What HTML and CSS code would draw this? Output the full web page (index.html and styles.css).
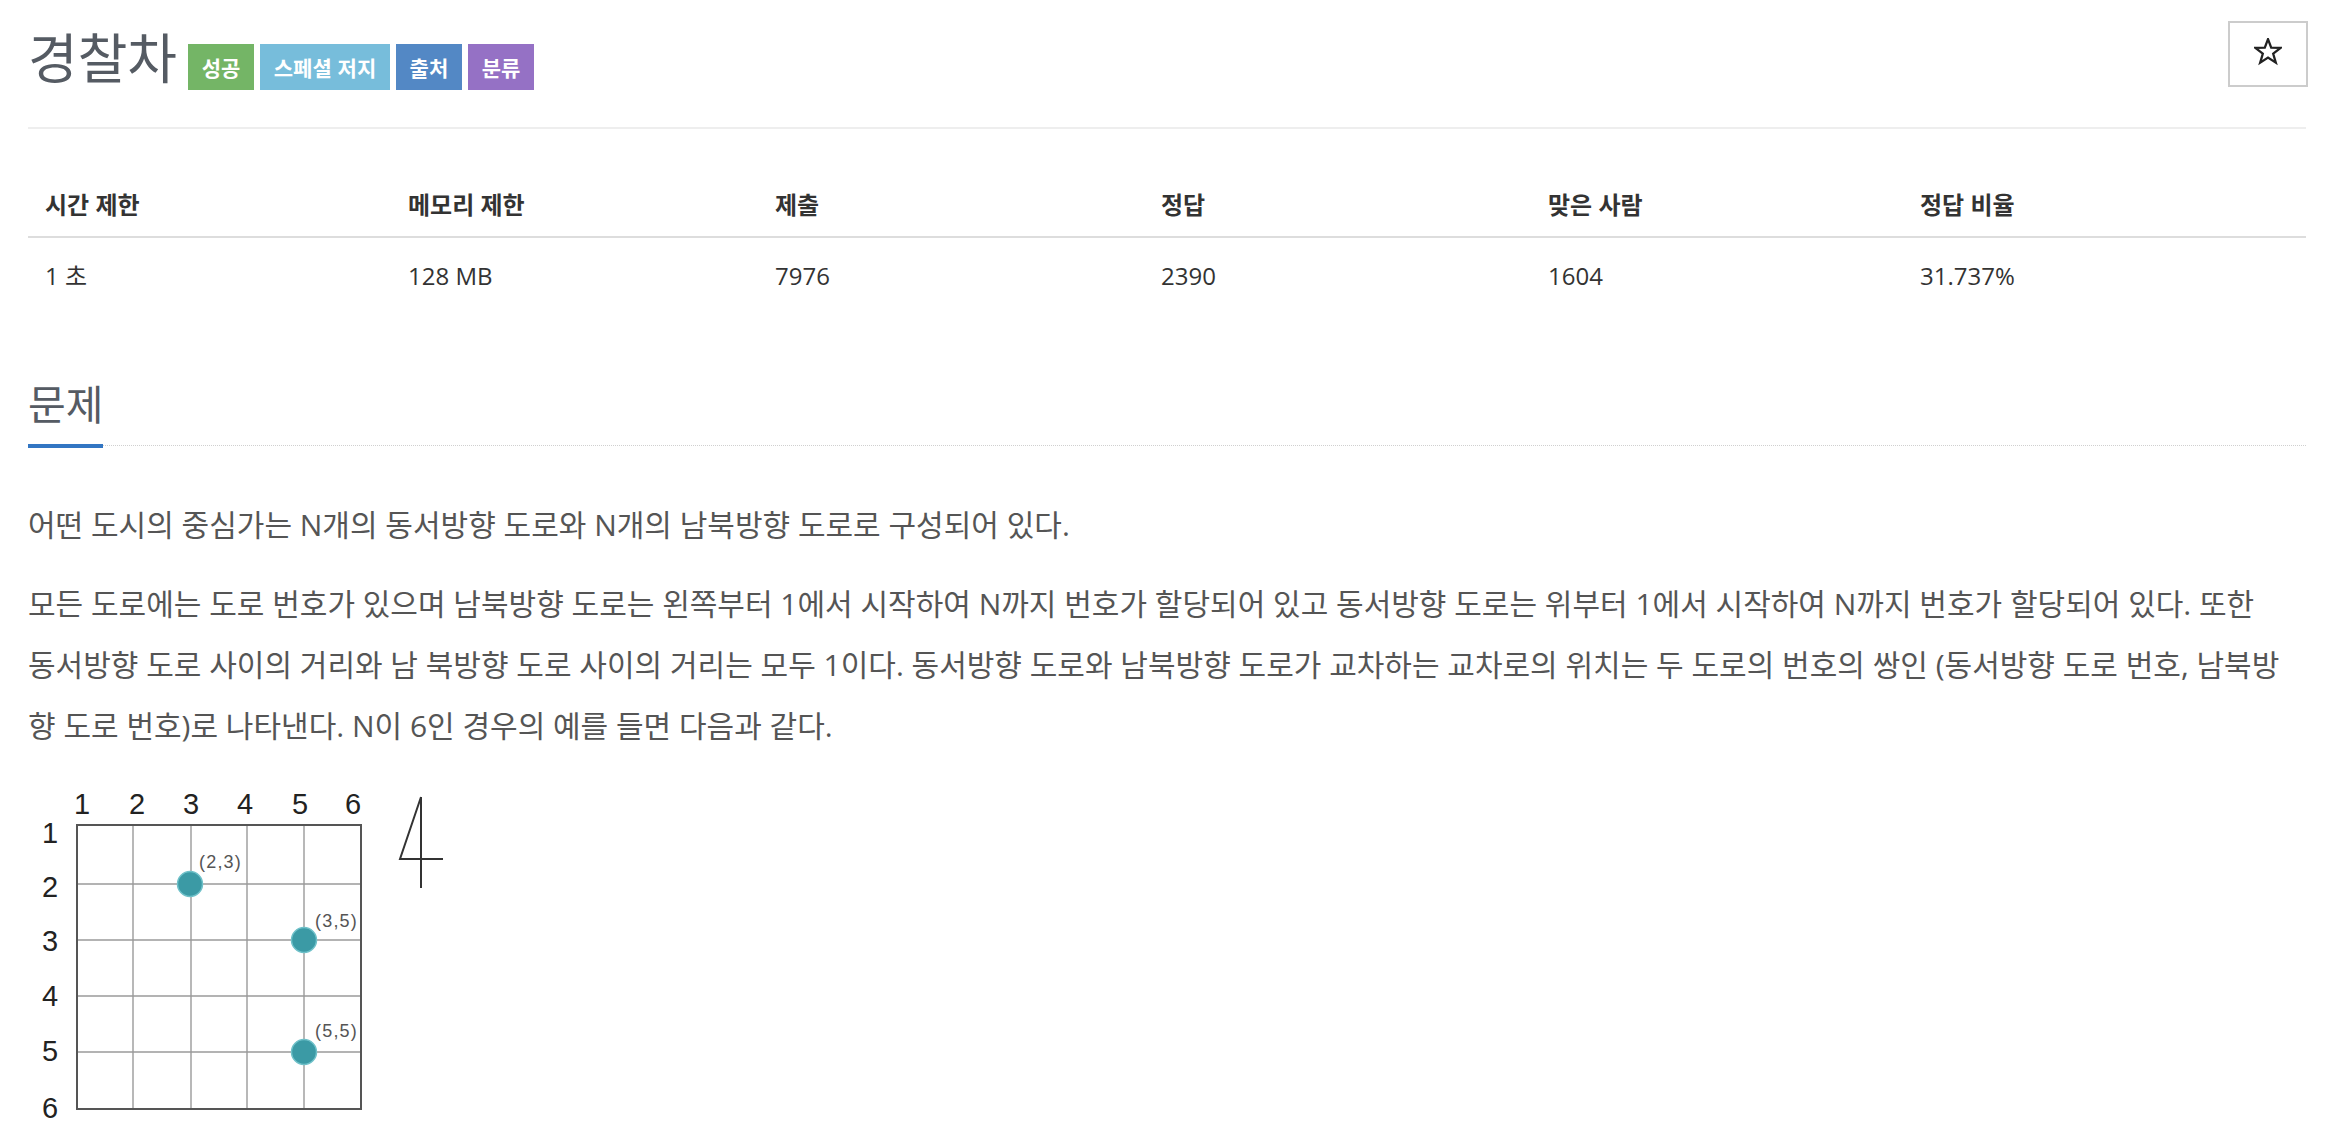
FILE: index.html
```html
<!DOCTYPE html>
<html lang="ko">
<head>
<meta charset="utf-8">
<title>경찰차</title>
<link rel="stylesheet" href="styles.css">
</head>
<body>
<div class="page">
  <header class="head">
    <div class="title-row">
      <h1 class="title">경찰차</h1>
      <div class="labels">
        <span class="label ac">성공</span>
        <span class="label spj">스페셜 저지</span>
        <span class="label src">출처</span>
        <span class="label cat">분류</span>
      </div>
    </div>
    <button class="star" type="button" aria-label="즐겨찾기">
      <svg width="28" height="28" viewBox="0 0 28 28" xmlns="http://www.w3.org/2000/svg">
        <path d="M14 1.2 L17.2 9.6 L26.6 9.9 L19.2 15.7 L21.8 24.6 L14 19.5 L6.2 24.6 L8.8 15.7 L1.4 9.9 L10.8 9.6 Z" fill="none" stroke="#222" stroke-width="2.3" stroke-linejoin="miter"/>
      </svg>
    </button>
  </header>

  <div class="stats">
    <div class="th">시간 제한</div>
    <div class="th">메모리 제한</div>
    <div class="th">제출</div>
    <div class="th">정답</div>
    <div class="th">맞은 사람</div>
    <div class="th">정답 비율</div>
    <div class="td">1 초</div>
    <div class="td">128 MB</div>
    <div class="td">7976</div>
    <div class="td">2390</div>
    <div class="td">1604</div>
    <div class="td">31.737%</div>
  </div>

  <section class="problem">
    <div class="headline"><h2>문제</h2></div>
    <div class="problem-text">
      <p>어떤 도시의 중심가는 N개의 동서방향 도로와 N개의 남북방향 도로로 구성되어 있다.</p>
      <p>모든 도로에는 도로 번호가 있으며 남북방향 도로는 왼쪽부터 1에서 시작하여 N까지 번호가 할당되어 있고 동서방향 도로는 위부터 1에서 시작하여 N까지 번호가 할당되어 있다. 또한 동서방향 도로 사이의 거리와 남 북방향 도로 사이의 거리는 모두 1이다. 동서방향 도로와 남북방향 도로가 교차하는 교차로의 위치는 두 도로의 번호의 쌍인 (동서방향 도로 번호, 남북방 향 도로 번호)로 나타낸다. N이 6인 경우의 예를 들면 다음과 같다.</p>
      <svg class="figure" width="440" height="360" viewBox="0 0 440 360" xmlns="http://www.w3.org/2000/svg">
        <rect x="0" y="0" width="440" height="360" fill="#ffffff"/>
        <g stroke="#9a9a9a" stroke-width="1.4">
          <line x1="105" y1="51" x2="105" y2="335"/>
          <line x1="163" y1="51" x2="163" y2="335"/>
          <line x1="219" y1="51" x2="219" y2="335"/>
          <line x1="276" y1="51" x2="276" y2="335"/>
          <line x1="49" y1="110" x2="333" y2="110"/>
          <line x1="49" y1="166" x2="333" y2="166"/>
          <line x1="49" y1="222" x2="333" y2="222"/>
          <line x1="49" y1="278" x2="333" y2="278"/>
        </g>
        <rect x="49" y="51" width="284" height="284" fill="none" stroke="#555" stroke-width="2"/>
        <g class="fig-num" font-size="29" fill="#222" text-anchor="middle">
          <text x="54" y="40">1</text>
          <text x="109" y="40">2</text>
          <text x="163" y="40">3</text>
          <text x="217" y="40">4</text>
          <text x="272" y="40">5</text>
          <text x="325" y="40">6</text>
          <text x="22" y="69">1</text>
          <text x="22" y="123">2</text>
          <text x="22" y="177">3</text>
          <text x="22" y="232">4</text>
          <text x="22" y="287">5</text>
          <text x="22" y="344">6</text>
        </g>
        <g fill="#3b9aa5" stroke="#6fc1c9" stroke-width="1.5">
          <circle cx="162" cy="110" r="12.5"/>
          <circle cx="276" cy="166" r="12.5"/>
          <circle cx="276" cy="278" r="12.5"/>
        </g>
        <g class="fig-lab" font-size="18" fill="#555">
          <text x="171" y="94">(2,3)</text>
          <text x="287" y="153">(3,5)</text>
          <text x="287" y="263">(5,5)</text>
        </g>
        <path d="M393 23 L372 85 L415 85 M393 23 L393 114" fill="none" stroke="#333" stroke-width="2"/>
      </svg>
    </div>
  </section>
</div>
</body>
</html>
```

FILE: styles.css
```css
* { box-sizing: border-box; }

html, body {
  margin: 0;
  padding: 0;
  background: #ffffff;
}

body {
  font-family: "Open Sans", "Noto Sans CJK KR", sans-serif;
  color: #333;
}

.page {
  padding: 0 28px;
}

.head {
  display: flex;
  justify-content: space-between;
  align-items: flex-start;
  height: 129px;
  padding-top: 21px;
  border-bottom: 2px solid #eeeeee;
}

.title-row {
  display: flex;
  align-items: flex-start;
}

.title {
  margin: 2px 0 0 0;
  font-family: "Noto Sans CJK KR", sans-serif;
  font-size: 54px;
  font-weight: 400;
  line-height: 66px;
  color: #555b63;
}

.labels {
  display: flex;
  gap: 6px;
  margin-top: 23px;
  margin-left: 11px;
}

.label {
  display: block;
  height: 46px;
  padding: 0 13.7px;
  font-family: "Noto Sans CJK KR", sans-serif;
  font-size: 21px;
  font-weight: 700;
  line-height: 46px;
  color: #ffffff;
}

.label.ac { background: #74b566; }
.label.spj { background: #77bddb; }
.label.src { background: #5388c5; }
.label.cat { background: #9571c5; }

.star {
  display: flex;
  align-items: center;
  justify-content: center;
  width: 80px;
  height: 66px;
  margin: 0 -2px 0 0;
  padding: 0 0 4px 0;
  border: 2px solid #cccccc;
  background: #ffffff;
}

.star svg {
  display: block;
}

.stats {
  display: grid;
  grid-template-columns: 363px 367px 386px 387px 372px 1fr;
  font-size: 24px;
  line-height: 34px;
}

.th {
  padding: 59px 17px 14px;
  font-weight: 700;
  border-bottom: 2px solid #dddddd;
}

.td {
  padding: 21px 17px 12px;
}

.problem {
  margin-top: 71px;
}

.headline {
  display: flex;
  border-bottom: 1px dotted #d0d0d0;
}

.headline h2 {
  margin: 0 0 -3px 0;
  padding: 0 0 16px 0;
  font-family: "Noto Sans CJK KR", sans-serif;
  font-size: 41px;
  font-weight: 400;
  line-height: 52px;
  color: #555b63;
  border-bottom: 4px solid #3276c3;
}

.problem-text {
  padding-top: 48px;
  font-size: 30px;
  line-height: 61px;
  color: #555555;
  word-break: keep-all;
}

.problem-text p {
  margin: 0 0 18px 0;
}

.figure {
  display: block;
}

.fig-num {
  font-family: "Liberation Sans", sans-serif;
}

.fig-lab {
  font-family: "Liberation Sans", sans-serif;
  letter-spacing: 1.2px;
}
```
